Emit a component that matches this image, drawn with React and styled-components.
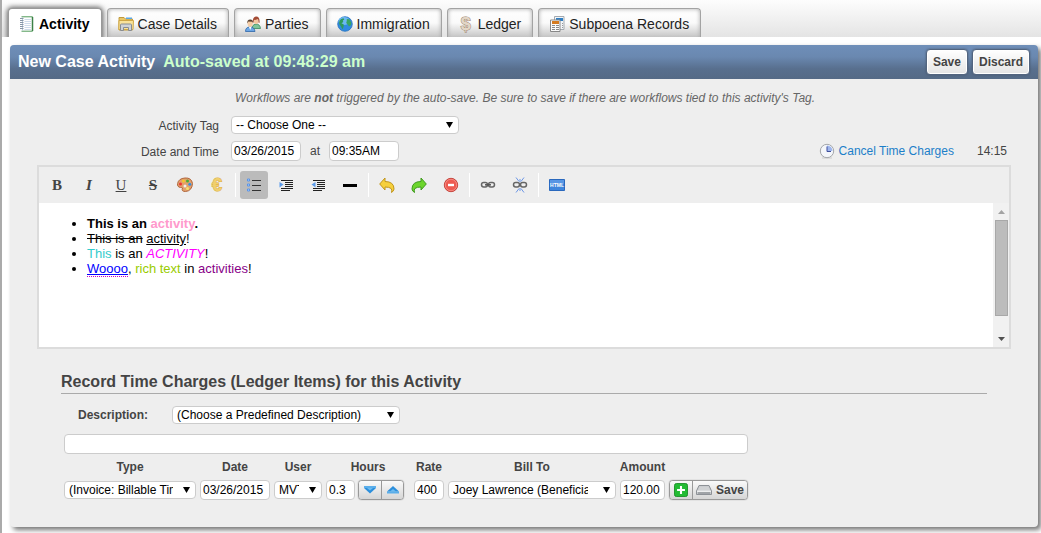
import React from 'react';
import styled, { createGlobalStyle, css } from 'styled-components';

const GlobalStyle = createGlobalStyle`
    * {
        box-sizing: border-box;
    }
    body {
        margin: 0;
        background: #fff;
        color: #444;
        font-family: "Liberation Sans", Arial, sans-serif;
        font-size: 12px;
    }
    button, input, select {
        font-family: inherit;
        font-size: 12px;
        margin: 0;
    }
`

const Page = styled.div`
    min-height: 100vh;
    border-left: 2px solid #aaa;
    overflow: hidden;
`

/* ---- tabs ---- */

const TabBar = styled.nav`
    display: flex;
    gap: 5px;
    height: 37px;
    padding: 8px 6px 0 6px;
    overflow: hidden;
    background: linear-gradient(#fdfdfd, #e4e4e4);
`

const Tab = styled.a`
    display: flex;
    align-items: center;
    gap: 4px;
    height: 32px;
    padding: 0 11px 2px 10px;
    border: 1px solid #a3a3a3;
    border-bottom: none;
    border-radius: 4px 4px 0 0;
    background: linear-gradient(#fff 0%, #fafafa 45%, #e4e4e4 65%, #c0c0c0 95%);
    box-shadow: inset 0 0 4px #aaa;
    color: #222;
    font-size: 14px;
    white-space: nowrap;
    text-decoration: none;
    ${({ $active }) => $active && css`
        background: #fff;
        box-shadow: 0 0 5px 1px #666;
        border-color: #999;
        color: #000;
        font-weight: bold;
    `}
`

/* ---- panel ---- */

const Panel = styled.main`
    margin: 8px 3px 6px 8px;
    padding-bottom: 27px;
    border-radius: 4px;
    background: #eee;
    box-shadow: 3px 3px 5px #777;
`

const PanelHeader = styled.header`
    display: flex;
    align-items: center;
    gap: 4px;
    height: 34px;
    padding: 0 8px;
    border-radius: 4px 4px 0 0;
    background: linear-gradient(#6f8fb9 0%, #6a88b0 35%, #586f8e 70%, #556a86 100%);
`

const PanelTitle = styled.h1`
    margin: 0 auto 0 0;
    color: #fff;
    font-size: 16px;
    font-weight: bold;
`

const AutoSaved = styled.span`
    margin-left: 8px;
    color: #cfc;
`

const HeaderButton = styled.button`
    height: 26px;
    padding: 0 6px 1px 6px;
    border: 1px solid #53657f;
    border-radius: 4px;
    background: linear-gradient(#fff, #e4e4e4);
    box-shadow: inset 0 0 0 1px #fff, 0 0 2px #465468;
    color: #444;
    font-weight: bold;
`

const Form = styled.div`
    display: grid;
    grid-template-columns: 209px 1fr;
    column-gap: 12px;
    row-gap: 7px;
    align-items: center;
    padding: 9px 31px 4px 0;
`

const Note = styled.p`
    grid-column: 2;
    margin: 0;
    padding: 3px 0 4px 4px;
    line-height: 14px;
    color: #666;
    font-style: italic;
`

const FieldLabel = styled.label`
    padding-top: 2px;
    text-align: right;
`

const FieldRow = styled.div`
    display: flex;
    align-items: center;
    gap: 9px;
`

const TextInput = styled.input`
    width: ${({ $width }) => $width || '100%'};
    height: 20px;
    padding: 0 2px;
    border: 1px solid #ccc;
    border-radius: 4px;
    background: #fff;
    color: #000;
`

const SelectBox = styled.span`
    display: inline-grid;
    align-items: center;
    width: ${({ $width }) => $width};
    > * {
        grid-area: 1 / 1;
    }
    > svg {
        justify-self: end;
        margin-right: 6px;
        pointer-events: none;
    }
`

const NativeSelect = styled.select`
    width: 100%;
    height: 18px;
    padding: 0 ${({ $arrowSpace }) => $arrowSpace || '22px'} 0 4px;
    border: 1px solid #ccc;
    border-radius: 4px;
    appearance: none;
    background: #fff;
    color: #000;
`

const Select = ({ width, arrowSpace, options, ...rest }) => (
    <SelectBox $width={width}>
        <NativeSelect $arrowSpace={arrowSpace} {...rest}>
            {options.map(option => <option key={option}>{option}</option>)}
        </NativeSelect>
        <svg width="7" height="6" viewBox="0 0 7 6"><path d="M0 0h7L3.500 6z" fill="#000" /></svg>
    </SelectBox>
)

const Timer = styled.div`
    display: flex;
    align-items: center;
    gap: 4px;
    margin-left: auto;
`

const TimerLink = styled.a`
    color: #1c7fc9;
    text-decoration: none;
`

const Elapsed = styled.span`
    margin-left: 19px;
`

/* ---- editor ---- */

const Editor = styled.section`
    margin: 0 27px;
    border: 2px solid #dcdcdc;
`

const Toolbar = styled.div`
    display: flex;
    align-items: center;
    gap: 4px;
    padding: 4px;
`

const ToolButton = styled.button`
    display: flex;
    align-items: center;
    justify-content: center;
    width: 28px;
    height: 28px;
    padding: 0;
    border: none;
    border-radius: 3px;
    background: ${({ $pressed }) => ($pressed ? '#bbb' : 'transparent')};
    color: #444;
    font-family: "Liberation Serif", "Times New Roman", serif;
    font-size: 15px;
`

const Separator = styled.span`
    width: 1px;
    height: 24px;
    background: #fff;
`

const EditorBody = styled.div`
    display: flex;
    height: 144px;
    background: #fff;
`

const RichText = styled.ul`
    flex: 1;
    margin: 0;
    padding: 13px 8px 0 48px;
    color: #000;
    font-size: 13px;
    line-height: 15px;
    outline: none;
`

const Ink = styled.span`
    color: ${({ $color }) => $color};
`

const Misspelt = styled.u`
    color: #00f;
    border-bottom: 1px dotted #c0c;
`

const ScrollTrack = styled.div`
    display: flex;
    flex-direction: column;
    align-items: center;
    width: 16px;
    background: #f1f1f1;
`

const ScrollThumb = styled.div`
    width: 13px;
    height: 96px;
    margin-bottom: auto;
    border: 1px solid #a8a8a8;
    background: #bcbcbc;
`

const ScrollArrow = ({ up }) => (
    <svg width="17" height="17" viewBox="0 0 17 17">
        <path d={up ? 'M5 11h7L8.500 7z' : 'M5 7h7L8.500 11z'} fill={up ? '#a3a3a3' : '#505050'} />
    </svg>
)

/* ---- time charges ---- */

const Charges = styled.section`
    margin: 24px 51px 0 51px;
`

const ChargesTitle = styled.h2`
    margin: 0 0 12px 0;
    padding-bottom: 2px;
    border-bottom: 1px solid #aaa;
    font-size: 16px;
    line-height: 18px;
`

const DescriptionRow = styled.div`
    display: flex;
    align-items: center;
    gap: 24px;
    margin-bottom: 10px;
    padding-left: 17px;
    font-weight: bold;
`

const ChargeFields = styled.div`
    width: fit-content;
    padding-left: 3px;
`

const ChargeTable = styled.table`
    margin: 5px 0 0 -2px;
    border-collapse: collapse;
    th {
        height: 16px;
        padding: 0;
    }
    td {
        padding: 5px 2px 0 2px;
    }
    td:nth-child(4) {
        padding-right: 8px;
    }
    td:last-child {
        padding-right: 0;
    }
`

const Cell = styled.div`
    display: flex;
    align-items: center;
    gap: 3px;
    height: 20px;
`

const ButtonGroup = styled.div`
    display: flex;
    height: 20px;
    border: 1px solid #999;
    border-radius: 4px;
    overflow: hidden;
    box-shadow: 0 0 1px #777;
`

const GroupButton = styled.button`
    display: flex;
    align-items: center;
    justify-content: center;
    gap: 4px;
    min-width: 22px;
    padding: 0 3px;
    border: none;
    background: linear-gradient(#fafafa, #d6d6d6);
    color: #444;
    font-weight: bold;
    & + & {
        border-left: 1px solid #999;
    }
`

/* ---- icons ---- */

const Icon = ({ children, size = 16 }) => (
    <svg width={size} height={size} viewBox="0 0 16 16" aria-hidden="true">{children}</svg>
)

const CurrencySign = styled.span`
    width: 16px;
    color: ${({ $fill }) => $fill};
    font-family: "Liberation Sans", Arial, sans-serif;
    font-size: 18px;
    font-weight: bold;
    line-height: 22px;
    text-align: center;
    -webkit-text-stroke: 1px ${({ $edge }) => $edge};
    paint-order: stroke fill;
`

const NotebookIcon = () => (
    <Icon>
        <path d="M3 .5h10.500v15H3z" fill="#fff" />
        <path d="M2.500 .8h11v14.400h-11" fill="none" stroke="#4f9a58" />
        <path d="M13.500 1v14" stroke="#3b8046" strokeWidth="1.500" />
        <path d="M3.500 1.500v13" stroke="#b9c8d8" />
        <path d="M5.500 3.500H12M5.500 5.500H12M5.500 7.500H12M5.500 9.500H12M5.500 11.500H12M5.500 13.500H12" stroke="#cfdcea" />
        <path d="M1 2.500h3.500M1 4.500h3.500M1 6.500h3.500M1 8.500h3.500M1 10.500h3.500M1 12.500h3.500" stroke="#8797a6" />
    </Icon>
)

const FolderIcon = () => (
    <Icon>
        <path d="M1 3.500V1.500h5l1.500 1.500H14.500v11H1z" fill="#e9c667" stroke="#c09a3c" />
        <path d="M8 1.500h6v1.500H8z" fill="#5ba7e2" />
        <path d="M1 4.500h14.500l-.5 9H.8z" fill="#f9e29a" stroke="#d0a745" />
        <path d="M2.500 14.500V9q0-1 1-1h9q1 0 1 1v5.500h-3v-3h-5v3z" fill="#cfd2d6" stroke="#888c92" />
    </Icon>
)

const PeopleIcon = () => (
    <Icon>
        <path d="M7 11.500q1-3.500 4-3.500 4 0 4.500 4.500H8z" fill="#7fc49b" stroke="#3c8a5c" strokeWidth=".8" />
        <ellipse cx="11" cy="4.800" rx="2.700" ry="3.300" fill="#f3c7a0" />
        <path d="M7.800 7.500Q7.300.5 11.200.5t3.300 6.500l-1-.5q.3-3-1-3.500-2 1.200-3.500.8-.2 2-1.200 3.700z" fill="#a34b35" />
        <path d="M.5 15.500q0-4.500 4.500-4.500t5 4.500z" fill="#6ca7e6" stroke="#2d66a8" strokeWidth=".8" />
        <path d="M4 11l1.200 3L6.500 11z" fill="#fff" />
        <ellipse cx="5.200" cy="7.500" rx="2.600" ry="3.200" fill="#f6cda6" />
        <path d="M2.200 7.500Q2 3.500 5.200 3.500t3 4l-.8-1.700-4-.3z" fill="#59402f" />
    </Icon>
)

const GlobeIcon = () => (
    <Icon>
        <circle cx="8" cy="8" r="7.300" fill="#2f8be0" stroke="#2a71bd" strokeWidth=".8" />
        <ellipse cx="7" cy="5" rx="5.500" ry="4" fill="#6cb8f3" />
        <path d="M2.500 4.500q1.500-2 4-2.300l.8 1.300-1.500 1 .5 1.500-1.800 1.200 2.300 1.300L6.500 11l-1 2.500L4 10.500 2.500 8.500Q1.800 6.500 2.500 4.500z" fill="#2f9a5e" />
        <path d="M9.800 3l2.500.2 2 3.300-.3 2.500-2 1.500-1.300-2-1.500-1.500.6-2z" fill="#37a464" />
    </Icon>
)

const PapersIcon = () => (
    <Icon>
        <path d="M5.500.5h9.500v13H5.500z" fill="#f2f5f8" stroke="#a3a9af" />
        <path d="M7 2h7v3H7z" fill="#2f7fc4" />
        <path d="M13 7.500h1M13 9.500h1M13 11.500h1" stroke="#999" />
        <path d="M1.500 4h9.500v11.500H1.500z" fill="#fafafa" stroke="#888" />
        <path d="M3 5h7v3H3z" fill="#d57a1e" />
        <path d="M3 9.500h3M7 9.500h3M3 11.500h3M7 11.500h3M3 13.500h3M7 13.500h3" stroke="#888" />
    </Icon>
)

const ClockIcon = () => (
    <Icon>
        <path d="M3 14.500h10v1H3z" fill="#ccc" />
        <circle cx="8" cy="8" r="6.700" fill="#f4f6fa" stroke="#a3a6aa" />
        <path d="M8 2.500A5.500 5.500 0 0 1 13.500 8H8z" fill="#9fb6ec" />
        <path d="M8 3.500V8.500h4" fill="none" stroke="#3f4f9c" />
    </Icon>
)

const PaletteIcon = () => (
    <Icon>
        <path d="M3.500 10.500Q0 10 .6 6.500 1.500 1.500 8 1t7.500 5.500q-.5 7.500-7 8-4.500 0-3-3.500-.5-.7-2-.5z" fill="#e2a06c" stroke="#b0663c" />
        <circle cx="8" cy="9" r="1.500" fill="#eee" />
        <circle cx="3.500" cy="7" r="1.500" fill="#e33" />
        <circle cx="6.500" cy="4" r="1.500" fill="#f4c630" />
        <circle cx="10.500" cy="4" r="1.500" fill="#49ad39" />
        <circle cx="12.800" cy="7.200" r="1.500" fill="#388fdd" />
        <circle cx="10.500" cy="11.500" r="1.500" fill="#f4e26a" />
    </Icon>
)

const ListIcon = () => (
    <Icon>
        <path d="M6 3.500h9M6 8.500h9M6 13.500h9" stroke="#333" />
        <path d="M1.500 2h2v2h-2zM1.500 7h2v2h-2zM1.500 12h2v2h-2z" fill="#b9d5fb" stroke="#5b94e6" />
    </Icon>
)

const IndentIcon = ({ outdent }) => (
    <Icon>
        <path d="M3 3.500h12M7 5.500h8M7 7.500h8M7 9.500h8M3 11.500h12M3 13.500h9" stroke="#222" />
        <path d={outdent ? 'M5.500 5L1.500 7.500l4 3z' : 'M1.500 5l4 2.500-4 3z'} fill="#5c9bea" />
    </Icon>
)

const RuleIcon = () => (
    <Icon>
        <path d="M1 7h14v3H1z" fill="#000" />
    </Icon>
)

const ArrowIcon = ({ redo }) => (
    <Icon>
        <path
            d="M6 1v3.500q9 0 9 7.500 0 2-2.500 3.500 2-5.500-6.500-5.500v3L.7 7z"
            transform={redo ? 'matrix(-1 0 0 1 16 0)' : undefined}
            fill={redo ? '#6cd52c' : '#f6d03c'}
            stroke={redo ? '#3f9a1e' : '#c0951c'}
            strokeLinejoin="round"
        />
    </Icon>
)

const StopIcon = () => (
    <Icon>
        <circle cx="8" cy="8" r="6.700" fill="#ee5a50" stroke="#c4453d" />
        <circle cx="8" cy="8" r="5.700" fill="none" stroke="#f6938b" strokeWidth=".8" />
        <path d="M5 6.800h6v2.400H5z" fill="#fff" />
    </Icon>
)

const LinkIcon = ({ broken }) => (
    <Icon>
        <rect x="1.500" y="5.500" width="6" height="4.500" rx="2.200" fill="none" stroke="#666" strokeWidth="1.500" />
        <rect x="8.500" y="5.500" width="6" height="4.500" rx="2.200" fill="none" stroke="#666" strokeWidth="1.500" />
        {broken
            ? <path d="M4 .5l3 4M12 .5L9 4.500M4 15.500L7 11.500M12 15.500L9 11.500M8 2v3M8 11v3" stroke="#6d97e6" />
            : <path d="M5 7.800h6" stroke="#555" strokeWidth="1.500" />}
    </Icon>
)

const HtmlIcon = () => (
    <svg width="16" height="12" viewBox="0 0 16 12" aria-hidden="true">
        <path d="M.5.5h15v11H.5z" fill="#3f86dc" stroke="#2a68bd" />
        <path d="M1 1h14v4H1z" fill="#5796e4" />
        <text
            x="8"
            y="8"
            textAnchor="middle"
            fontFamily="Liberation Sans"
            fontSize="5"
            fontWeight="bold"
            fill="#fff"
        >
            HTML
        </text>
    </svg>
)

const ChevronIcon = ({ up }) => (
    <svg width="14" height="10" viewBox="0 0 14 10" aria-hidden="true">
        <g transform={up ? 'matrix(1 0 0 -1 0 9.500)' : undefined}>
            <path d="M1 1h12v2H1z" fill="#5aaeea" />
            <path d="M1 3h12L7 8.500z" fill="#2c8fdc" />
            <path d="M4 3h6L7 5.500z" fill="#6cbcf2" />
        </g>
    </svg>
)

const PlusIcon = () => (
    <Icon size={14}>
        <rect x=".5" y=".5" width="15" height="15" rx="2.500" fill="#22bb33" stroke="#128a20" />
        <path d="M8 3.500v9M3.500 8h9" stroke="#fff" strokeWidth="2.400" />
    </Icon>
)

const DriveIcon = () => (
    <Icon>
        <path d="M3 3.500h10L15.500 9v3.500H.5V9z" fill="#c4c7ca" stroke="#8d9196" strokeLinejoin="round" />
        <path d="M3.500 4.500h9l1.500 4H2z" fill="#d0d2d4" />
        <path d="M1 9.200h14" stroke="#fff" />
        <path d="M2 11h12" stroke="#7c8085" />
    </Icon>
)

const tabs = [
    { name: 'Activity', icon: <NotebookIcon />, active: true },
    { name: 'Case Details', icon: <FolderIcon /> },
    { name: 'Parties', icon: <PeopleIcon /> },
    { name: 'Immigration', icon: <GlobeIcon /> },
    { name: 'Ledger', icon: <CurrencySign $fill="#e3d6c6" $edge="#a08b76">$</CurrencySign> },
    { name: 'Subpoena Records', icon: <PapersIcon /> },
]

const tools = [
    [
        { name: 'Bold', icon: <b>B</b> },
        { name: 'Italic', icon: <b><i>I</i></b> },
        { name: 'Underline', icon: <u>U</u> },
        { name: 'Strikethrough', icon: <b><s>S</s></b> },
        { name: 'Text color', icon: <PaletteIcon /> },
        { name: 'Symbol', icon: <CurrencySign $fill="#f0cf6c" $edge="#dbae45">€</CurrencySign> },
    ],
    [
        { name: 'Bullets', icon: <ListIcon />, pressed: true },
        { name: 'Indent', icon: <IndentIcon /> },
        { name: 'Outdent', icon: <IndentIcon outdent /> },
        { name: 'Rule', icon: <RuleIcon /> },
    ],
    [
        { name: 'Undo', icon: <ArrowIcon /> },
        { name: 'Redo', icon: <ArrowIcon redo /> },
        { name: 'Remove formatting', icon: <StopIcon /> },
    ],
    [
        { name: 'Link', icon: <LinkIcon /> },
        { name: 'Unlink', icon: <LinkIcon broken /> },
    ],
    [
        { name: 'Source', icon: <HtmlIcon /> },
    ],
]

const ActivityEditor = () => (
    <Editor>
        <Toolbar>
            {tools.map((group, i) => (
                <React.Fragment key={i}>
                    {i > 0 && <Separator />}
                    {group.map(tool => (
                        <ToolButton key={tool.name} aria-label={tool.name} $pressed={tool.pressed}>
                            {tool.icon}
                        </ToolButton>
                    ))}
                </React.Fragment>
            ))}
        </Toolbar>
        <EditorBody>
            <RichText contentEditable suppressContentEditableWarning spellCheck={false}>
                <li><b>This is an <Ink $color="#f9c">activity</Ink>.</b></li>
                <li><s>This is an</s> <u>activity</u>!</li>
                <li><Ink $color="#3cc">This</Ink> is an <Ink $color="#f0f"><i>ACTIVITY</i></Ink>!</li>
                <li>
                    <Misspelt>Woooo</Misspelt>, <Ink $color="#9c0">rich text</Ink> in <Ink $color="#808">activities</Ink>!
                </li>
            </RichText>
            <ScrollTrack>
                <ScrollArrow up />
                <ScrollThumb />
                <ScrollArrow />
            </ScrollTrack>
        </EditorBody>
    </Editor>
)

const TimeCharges = () => (
    <Charges>
        <ChargesTitle>Record Time Charges (Ledger Items) for this Activity</ChargesTitle>
        <DescriptionRow>
            <label htmlFor="predefined">Description:</label>
            <Select id="predefined" width="228px" options={['(Choose a Predefined Description)']} />
        </DescriptionRow>
        <ChargeFields>
            <TextInput aria-label="Description" />
            <ChargeTable>
                <thead>
                    <tr>
                        <th>Type</th>
                        <th>Date</th>
                        <th>User</th>
                        <th>Hours</th>
                        <th>Rate</th>
                        <th>Bill To</th>
                        <th>Amount</th>
                        <th />
                    </tr>
                </thead>
                <tbody>
                    <tr>
                        <td><Cell><Select aria-label="Type" width="132px" options={['(Invoice: Billable Time)']} /></Cell></td>
                        <td><Cell><TextInput aria-label="Date" $width="70px" defaultValue="03/26/2015" /></Cell></td>
                        <td><Cell><Select aria-label="User" width="48px" options={['MVT']} /></Cell></td>
                        <td>
                            <Cell>
                                <TextInput aria-label="Hours" $width="29px" defaultValue="0.3" />
                                <ButtonGroup>
                                    <GroupButton aria-label="Less"><ChevronIcon /></GroupButton>
                                    <GroupButton aria-label="More"><ChevronIcon up /></GroupButton>
                                </ButtonGroup>
                            </Cell>
                        </td>
                        <td><Cell><TextInput aria-label="Rate" $width="30px" defaultValue="400" /></Cell></td>
                        <td>
                            <Cell>
                                <Select aria-label="Bill To" width="168px" arrowSpace="27px" options={['Joey Lawrence (Beneficiary)']} />
                            </Cell>
                        </td>
                        <td><Cell><TextInput aria-label="Amount" $width="45px" defaultValue="120.00" /></Cell></td>
                        <td>
                            <ButtonGroup>
                                <GroupButton aria-label="Add"><PlusIcon /></GroupButton>
                                <GroupButton><DriveIcon />Save</GroupButton>
                            </ButtonGroup>
                        </td>
                    </tr>
                </tbody>
            </ChargeTable>
        </ChargeFields>
    </Charges>
)

const App = () => {
    return (
        <Page>
            <GlobalStyle />
            <TabBar>
                {tabs.map(tab => (
                    <Tab key={tab.name} href="#" $active={tab.active}>
                        {tab.icon}
                        {tab.name}
                    </Tab>
                ))}
            </TabBar>
            <Panel>
                <PanelHeader>
                    <PanelTitle>
                        New Case Activity
                        <AutoSaved>Auto-saved at 09:48:29 am</AutoSaved>
                    </PanelTitle>
                    <HeaderButton>Save</HeaderButton>
                    <HeaderButton>Discard</HeaderButton>
                </PanelHeader>
                <Form>
                    <Note>
                        Workflows are <b>not</b> triggered by the auto-save. Be sure to save if there are workflows tied to this activity's Tag.
                    </Note>
                    <FieldLabel htmlFor="tag">Activity Tag</FieldLabel>
                    <FieldRow>
                        <Select id="tag" width="228px" options={['-- Choose One --']} />
                    </FieldRow>
                    <FieldLabel htmlFor="date">Date and Time</FieldLabel>
                    <FieldRow>
                        <TextInput id="date" $width="70px" defaultValue="03/26/2015" />
                        <label htmlFor="time">at</label>
                        <TextInput id="time" $width="70px" defaultValue="09:35AM" />
                        <Timer>
                            <ClockIcon />
                            <TimerLink href="#">Cancel Time Charges</TimerLink>
                            <Elapsed>14:15</Elapsed>
                        </Timer>
                    </FieldRow>
                </Form>
                <ActivityEditor />
                <TimeCharges />
            </Panel>
        </Page>
    )
}

export default App;
